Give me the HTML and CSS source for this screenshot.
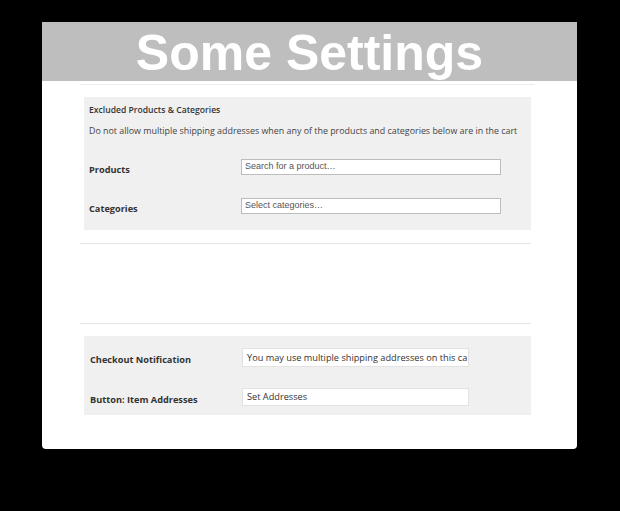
FILE: index.html
```html
<!DOCTYPE html>
<html>
<head>
<meta charset="utf-8">
<link rel="stylesheet" href="styles.css">
</head>
<body>
<div class="card">
  <div class="header"><h1 class="title">Some Settings</h1></div>
  <div class="content">
    <div class="rule rule-top"></div>
    <div class="box box-excluded">
      <div class="box-title">Excluded Products &amp; Categories</div>
      <div class="box-desc">Do not allow multiple shipping addresses when any of the products and categories below are in the cart</div>
      <div class="field-row first">
        <div class="label">Products</div>
        <div class="select-input">Search for a product…</div>
      </div>
      <div class="field-row">
        <div class="label">Categories</div>
        <div class="select-input">Select categories…</div>
      </div>
    </div>
    <div class="rule rule-mid"></div>
    <div class="rule rule-low"></div>
    <div class="box box-text">
      <div class="text-row first">
        <div class="label label-wide">Checkout Notification</div>
        <div class="text-input">You may use multiple shipping addresses on this ca</div>
      </div>
      <div class="text-row second">
        <div class="label label-wide">Button: Item Addresses</div>
        <div class="text-input short">Set Addresses</div>
      </div>
    </div>
  </div>
</div>
</body>
</html>
```

FILE: styles.css
```css
html, body {
  margin: 0;
  padding: 0;
  background: #000;
}
body {
  padding: 22px 0 0 42px;
  font-family: "Open Sans", "Liberation Sans", sans-serif;
}
.card {
  width: 535px;
  height: 427px;
  background: #fff;
  border-radius: 0 0 4px 4px;
  box-sizing: border-box;
}
.header {
  height: 59px;
  background: #bebebe;
  text-align: center;
}
.title {
  margin: 0;
  padding-top: 3px;
  font-family: "Liberation Sans", Arial, sans-serif;
  font-weight: bold;
  font-size: 50px;
  line-height: 56px;
  color: #fff;
  letter-spacing: 0;
}
.content {
  padding: 0 46px 0 38px;
}
.rule {
  height: 0;
  border-top: 1px solid #e6e6e6;
}
.rule-top {
  margin-top: 3px;
  margin-right: -4px;
  border-top-color: #ececec;
}
.box {
  background: #f0f0f0;
  margin-left: 4px;
  box-sizing: border-box;
}
.box-excluded {
  margin-top: 12px;
  height: 133px;
  padding: 7px 30px 0 5px;
}
.box-title {
  font-size: 8.6px;
  font-weight: 600;
  line-height: 12px;
  height: 12px;
  color: #333;
}
.box-desc {
  margin-top: 9px;
  font-size: 8.9px;
  line-height: 12px;
  height: 12px;
  color: #444;
  white-space: nowrap;
}
.field-row {
  display: flex;
  align-items: flex-start;
  margin-top: 23px;
  height: 16px;
}
.field-row.first {
  margin-top: 22px;
}
.label {
  width: 152px;
  flex: none;
  font-size: 9.2px;
  font-weight: 700;
  color: #333;
  line-height: 12px;
  padding-top: 5px;
}
.select-input {
  flex: 1;
  height: 16px;
  box-sizing: border-box;
  background: #fff;
  border: 1px solid #bdbdbd;
  font-family: "Liberation Sans", Arial, sans-serif;
  font-size: 9px;
  line-height: 13px;
  padding-left: 3px;
  color: #555;
  white-space: nowrap;
  overflow: hidden;
}
.rule-mid {
  margin-top: 13px;
}
.rule-low {
  margin-top: 79px;
}
.box-text {
  margin-top: 12px;
  height: 79px;
  padding: 12px 62px 0 6px;
}
.text-row {
  display: flex;
  align-items: flex-start;
}
.text-row.second {
  margin-top: 21px;
}
.label-wide {
  width: 152px;
  padding-top: 6px;
}
.text-input {
  flex: 1;
  height: 19px;
  box-sizing: border-box;
  background: #fff;
  border: 1px solid #e2e2e2;
  font-size: 9.2px;
  line-height: 17px;
  padding-left: 4px;
  color: #333;
  white-space: nowrap;
}
.text-input.short {
  height: 18px;
  line-height: 16px;
}
```
